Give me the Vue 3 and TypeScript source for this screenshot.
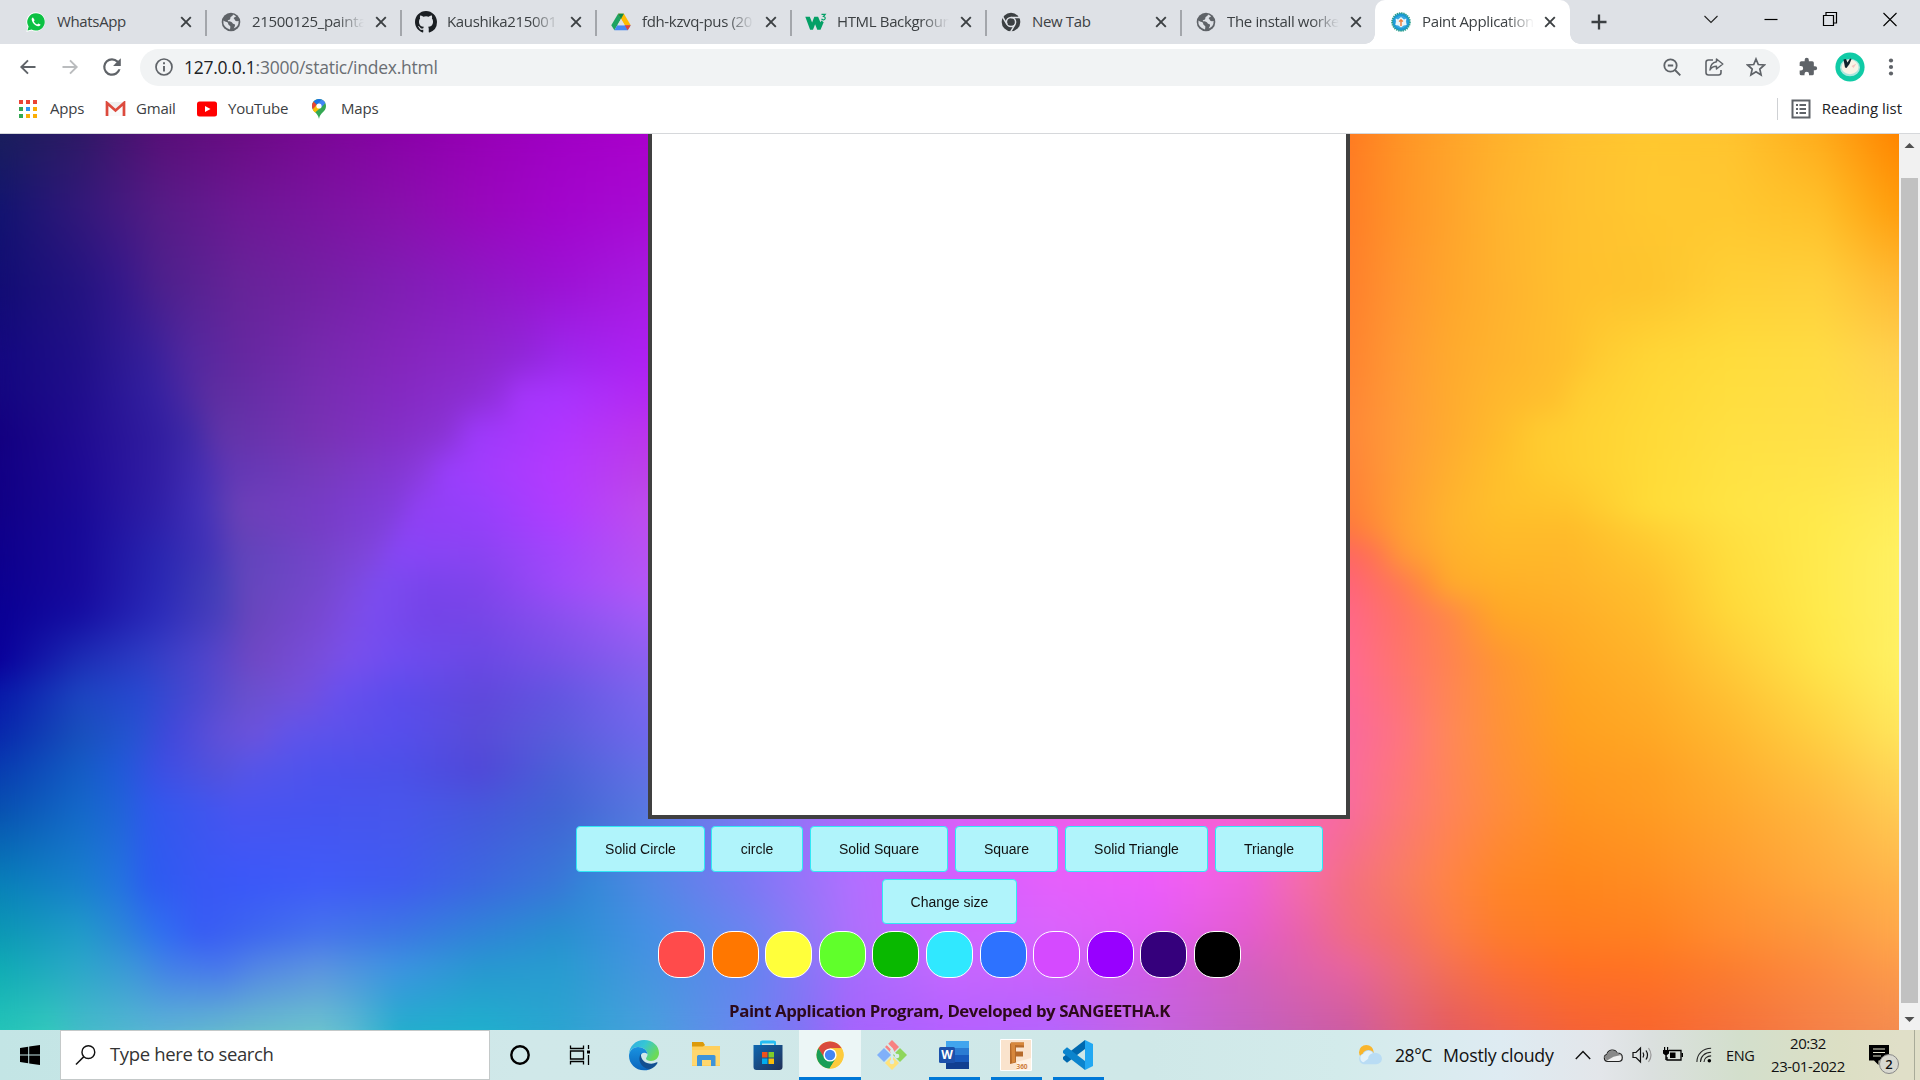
<script setup lang="ts">
interface Tab {
  title: string
  icon: string
  fade: boolean
}

const tabs: Tab[] = [
  { title: 'WhatsApp', icon: 'whatsapp', fade: false },
  { title: '21500125_painta', icon: 'globe', fade: true },
  { title: 'Kaushika215001', icon: 'github', fade: true },
  { title: 'fdh-kzvq-pus (20', icon: 'drive', fade: true },
  { title: 'HTML Backgroun', icon: 'w3', fade: true },
  { title: 'New Tab', icon: 'chrome', fade: false },
  { title: 'The install worke', icon: 'globe', fade: true },
  { title: 'Paint Application', icon: 'paint', fade: true },
]
const activeTab = 7

const shapes: { label: string; width: number }[] = [
  { label: 'Solid Circle', width: 129 },
  { label: 'circle', width: 92 },
  { label: 'Solid Square', width: 138 },
  { label: 'Square', width: 103 },
  { label: 'Solid Triangle', width: 143 },
  { label: 'Triangle', width: 108 },
]

const swatches: string[] = [
  '#ff4b4b', '#ff7700', '#ffff3b', '#60ff2b', '#09b800', '#30e8ff',
  '#2d72ff', '#d54aff', '#9800ff', '#35007c', '#000000',
]

const appsDots: string[] = [
  '#ea4335', '#ea4335', '#ea4335', '#34a853', '#2a94f4', '#fbae05', '#34a853', '#fbae05', '#fbae05',
]

/* Wallpaper colour mesh: a y coordinate, then "x colour" stops along that line. */
const mesh: [number, string][] = [
  [0, '0 1a1f5c,80 2f1a66,160 571078,240 6a0c84,320 7a0896,400 8a02a8,480 9700b6,560 a000c4,648 ab00cc,1350 ff7c22,1400 ff9426,1450 ffa42a,1500 ffb22c,1570 ffc030,1650 ffc830,1730 ffc430,1820 ffac1c,1899 ff8400'],
  [75, '0 121470,80 32187a,160 551c86,240 6c1894,320 7a14a0,400 8810ac,480 9808bc,560 a205cc,648 a80ad4,1350 ff7e26,1400 ff9428,1450 ffa42c,1500 ffb42e,1570 ffc030,1650 ffc830,1730 ffc830,1820 ffc02a,1899 ff9c0c'],
  [150, '0 120d74,80 241480,120 34188a,160 4c208c,240 662498,320 7420a4,400 801eb4,480 8e18c4,560 9c12d4,648 a81ae2,1350 ff802c,1400 ff9630,1450 ffa62c,1500 ffb22e,1570 ffc02e,1650 fec42e,1730 ffd036,1820 ffd03c,1899 ffb834'],
  [225, '0 140880,80 201088,150 36209a,190 52289f,240 6428a0,320 762aae,400 8426bc,480 8c28cc,520 9028d8,560 9c28ec,648 ae20f4,1350 ff8430,1400 ff9a34,1450 ffaa2e,1500 ffb42e,1570 ffc02e,1600 ffcc32,1650 ffd636,1730 ffdc3c,1820 ffdc44,1899 ffd050'],
  [262, '0 140680,80 200e8c,155 3420a0,185 4828a2,210 5c2ea0,320 772eb2,400 842ac2,470 8c2ed2,500 9430e2,520 a436fa,560 a834fe,648 b428f2,1350 ff8634,1400 ff9b36,1450 ffab2f,1500 ffb82d,1555 ffc02e,1580 ffce32,1650 ffd837,1730 ffde3f,1820 ffde46,1899 ffd850'],
  [300, '0 130080,80 200c90,160 321ea0,190 3e2aa6,220 6034a8,320 7832b4,400 8430c8,445 8a34d4,475 9c3afa,560 b036ff,648 bc34ec,1350 ff8838,1400 ff9c38,1450 ffac30,1500 ffbc2c,1540 ffcc30,1650 ffda38,1730 ffe042,1820 ffe048,1899 ffe050'],
  [338, '0 120084,80 1e0a94,160 321ea4,200 442eb2,232 6238b4,320 763abc,400 8438d4,424 8c3ce0,446 983efc,560 b43aff,648 bc40e8,1350 ff8438,1400 ff9d36,1450 ffb02f,1500 ffc02c,1540 ffca2e,1650 ffdb38,1730 ffe243,1820 ffe44a,1899 ffe656'],
  [375, '0 110086,80 1a0a96,160 3020a8,200 4230b8,222 563cb4,240 6c40b8,320 763cc6,395 823edc,418 9040f4,480 9640fc,560 b03cff,648 be4cec,1350 ff8038,1400 ff9e34,1450 ffb42e,1500 ffc02c,1570 ffc42c,1650 ffdc38,1730 ffe444,1820 ffe84c,1899 ffec5c'],
  [395, '0 10008a,80 180a98,160 2e22ac,205 4232b8,240 6642b6,320 763ec6,385 8042dc,406 8c42f4,480 9240f8,560 aa40ff,648 bc4ef0,1350 ff783e,1400 ff9e34,1450 ffb42e,1500 ffbc2a,1570 ffbc2a,1650 ffd034,1730 ffe042,1820 ffea4c,1899 ffee5e'],
  [420, '0 0e008c,80 180a9a,160 2a26b0,210 4234b8,240 6044ba,320 7444ca,370 8046dc,396 8646f6,480 8a44f2,560 a246fc,648 b852f2,1350 ff6860,1375 ff7450,1400 ff9638,1450 ffb02c,1500 ffb82a,1570 ffb82a,1650 ffc830,1730 ffde3e,1820 ffea4e,1899 fff062'],
  [450, '0 0c0090,80 180a9c,160 2a28b4,220 4640b8,245 6446bc,320 7448cc,355 7c4ae0,380 7c4cf0,430 7a44ec,480 8044ec,560 9e4afa,648 b456f6,1350 ff6478,1400 ff7854,1430 ff9236,1450 ffaa2c,1500 ffb028,1570 ffb42a,1650 ffc02e,1730 ffdc3c,1820 ffea4e,1899 fff064'],
  [480, '0 0a0094,80 160ea2,160 2c2cba,220 4a40bc,250 6846bc,320 7848d2,350 7c4ce4,375 7a4cf0,430 7444e8,480 7846e8,560 8c50f0,648 a45cf8,1350 ff6886,1400 ff7264,1450 ff8848,1480 ff9c30,1500 ffa826,1570 ffae28,1650 ffbc2c,1730 ffd83a,1820 ffea4c,1899 fff064'],
  [525, '0 0a009a,80 1c2cb4,140 2c3cc4,200 4c44cc,255 7048c4,320 784edc,350 7850ec,400 6e4cf0,480 6a48e4,560 7852e8,648 8c60f0,1350 ff6a90,1400 ff746c,1450 ff8450,1500 ff9632,1570 ffa824,1650 ffb42a,1730 ffcc38,1820 ffe64a,1899 fff064'],
  [560, '0 0818a8,80 1c44c0,140 2848d0,200 4c48d0,245 6850cc,300 7450dc,340 6850ee,400 5c4cec,480 6048dc,560 6456e2,648 7c66ee,1350 fe6a96,1400 fe7476,1450 ff8654,1500 ff9436,1570 ffa422,1650 ffae28,1730 ffc234,1820 ffdc46,1899 ffec60'],
  [600, '0 0828ac,80 1850bc,130 2454d0,170 4048dc,220 6050d8,255 6c52dc,290 6054ea,400 564eec,480 584cd8,560 5a5cdc,648 7068ec,1350 fa6a9c,1400 fe7480,1450 ff8858,1500 ff9238,1570 ffa020,1650 ffa824,1730 ffb830,1820 ffd042,1899 ffe45c'],
  [635, '0 083cb0,80 145cc4,120 205ad8,160 3c4ee4,220 5452dc,250 5656e8,320 4e52ee,400 4c50e8,480 5048d8,560 4c60d8,648 6470e6,1350 fa6c9c,1400 fe767c,1450 ff8658,1500 ff903a,1570 ff9a20,1650 ffa023,1730 ffb02f,1820 ffc440,1899 ffd858'],
  [675, '0 0850b0,80 1468c8,120 2064d8,150 3058ec,240 4a54f0,320 4654f0,400 4856ec,480 4658dc,560 4264d4,648 5878e0,750 7c7cf4,850 b068fc,950 d860f8,1050 ec5cec,1150 f45ee0,1250 f860d0,1350 f86c9c,1400 fc7878,1450 ff8458,1500 ff8c3c,1570 ff9420,1650 ff9c22,1730 ffa82e,1820 ffb840,1899 ffcc54'],
  [750, '0 0880b8,80 1880cc,120 2474e0,150 2c5cf0,200 3858f4,240 3a58f8,320 405cf8,400 405cf0,480 3c68e0,560 3878d8,590 3488d8,648 5088e4,750 7c78f4,850 b070ff,950 d060ff,1050 e460fc,1150 ec5cfc,1200 f060ec,1250 ee60d8,1300 f46cac,1350 f47080,1400 f87c64,1450 ff8444,1500 ff8628,1570 ff861c,1650 ff8c22,1730 ff9830,1820 ffa83e,1899 ffb44c'],
  [800, '0 0c98b4,80 209cc8,120 2c88d8,160 3070f0,200 385cf4,240 3c64f0,320 4674ec,400 3c78e4,480 3084d8,560 2890d0,648 4490e4,750 6c84f0,850 ac70fc,950 cc64ff,1050 d864fc,1150 e05cf4,1250 e45ccc,1300 e862ac,1350 f06c84,1400 f47068,1450 fc7c48,1500 fe7c2c,1570 ff7c20,1650 ff8020,1730 ff8c30,1820 fc983e,1899 ffa84c'],
  [835, '0 10acb4,80 2ca8c8,130 3c98d8,170 4480e8,220 4878ec,260 5488e4,320 5c94e0,400 3c94e0,480 2898d0,560 289cd0,648 4694e0,750 6484f0,850 a46cfc,950 c468ff,1050 cc60fc,1150 d05ce8,1250 d460c0,1350 e8649c,1400 ec6c78,1450 f47054,1500 fc7038,1570 ff7024,1650 ff7424,1730 fc7e30,1820 fc8c40,1899 fc9c4c'],
  [896, '0 24c4b8,50 34c8bc,80 44bcc8,160 5cb4d4,240 68bccc,320 6cc4cc,350 5cbcd0,400 24aecc,480 20b0cc,560 2ca4d0,648 48a0dc,750 6c84f0,800 8074f4,850 a464fc,950 b460ff,1050 b464fc,1150 c464e0,1250 c460c0,1350 cc5ca0,1400 dc6080,1450 e45c60,1500 ec6050,1570 f46238,1650 f8662e,1730 f4703c,1820 f48048,1899 f48c50'],
]

const rowGradient = (row: string): string =>
  `linear-gradient(90deg, ${row
    .split(',')
    .map((stop) => {
      const [x, colour] = stop.split(' ')
      return `#${colour} ${x}px`
    })
    .join(', ')})`

const bands = mesh.slice(0, -1).map(([y, row], i) => ({
  height: `${mesh[i + 1][0] - y}px`,
  top: rowGradient(row),
  bottom: rowGradient(mesh[i + 1][1]),
}))
</script>

<template>
  <div class="screen">
    <header class="tabstrip">
      <div v-for="(tab, i) in tabs" :key="i" class="tab" :class="{ active: i === activeTab, last: i === activeTab - 1 }">
        <svg v-if="tab.icon === 'whatsapp'" class="fav" viewBox="0 0 20 20">
          <path d="M10 .2a9.600 9.600 0 0 0-8.300 14.500L.3 19.900l5.200-1.400A9.600 9.600 0 1 0 10 .2z" fill="#fff" />
          <path d="M10 1.200a8.700 8.700 0 0 0-7.400 13.300l-1.100 4 4.100-1.100A8.700 8.700 0 1 0 10 1.200z" fill="#0cc143" />
          <path d="M7 5.400c-.9.2-1.500 1.200-1.300 2.400.5 3 3.400 6 6.400 6.500 1.300.2 2.300-.6 2.400-1.700l-2.200-1.200-1.100 1.100c-1.600-.6-2.800-1.800-3.400-3.300l.9-1z" fill="#fff" />
        </svg>
        <svg v-else-if="tab.icon === 'globe'" class="fav" viewBox="0 0 20 20">
          <circle cx="10" cy="10" r="9.300" fill="#5f6368" />
          <path d="M2.400 8.500c1.500 1.400 3.300 1 4.300 2 .8 1 .2 2 1.400 2.700 1.200.5 1.400 1.200 1.200 2.200l-.3 2A7.700 7.700 0 0 1 2.400 8.500zM12 2.600c-.2 1.500-1.400 1.700-2.300 2.400-.8.800 0 1.800-.8 2.500s-2 .2-2.200 1.200c.3 1.100 2.300.5 3.700 1.200 1.200.6 1.100 2 2.500 2.200 1.100.2 1.500 1 .8 2.400l-1 2.100A7.800 7.800 0 0 0 17.600 9c-1-.3-1.600.5-2.700.1-1.300-.5-1-2-2.200-2.500.2-1.200 1.500-1.200 2.300-2.300A7.500 7.500 0 0 0 12 2.600z" fill="#dee1e6" />
        </svg>
        <svg v-else-if="tab.icon === 'github'" class="fav wide" viewBox="0 0 16 16">
          <path fill="#1b1f23" d="M8 0C3.580 0 0 3.580 0 8c0 3.540 2.290 6.530 5.470 7.590.4.070.55-.17.55-.38 0-.19-.01-.82-.01-1.490-2.010.37-2.530-.49-2.690-.94-.09-.23-.48-.94-.82-1.130-.28-.15-.68-.52-.01-.53.63-.01 1.080.58 1.230.82.72 1.210 1.870.87 2.330.66.070-.52.28-.87.51-1.070-1.780-.2-3.640-.89-3.640-3.950 0-.87.31-1.590.82-2.150-.08-.2-.36-1.020.08-2.120 0 0 .67-.21 2.200.82a7.600 7.600 0 0 1 4 0c1.530-1.040 2.200-.82 2.200-.82.44 1.100.16 1.920.08 2.120.51.56.82 1.270.82 2.150 0 3.070-1.870 3.750-3.650 3.950.29.25.54.73.54 1.480 0 1.070-.01 1.930-.01 2.200 0 .21.15.46.55.38A8 8 0 0 0 16 8c0-4.420-3.580-8-8-8z" />
        </svg>
        <svg v-else-if="tab.icon === 'drive'" class="fav" viewBox="0 0 20 20">
          <path d="M7.100 1.800h5.800L6.300 13.300l-2.900 5L.3 13.300z" fill="#1ea362" />
          <path d="M12.900 1.800l6.800 11.500h-5.900L7.100 1.800z" fill="#ffba00" />
          <path d="M10 6.900l-2.900-5.100h5.800z" fill="#11894b" />
          <path d="M6.300 13.300h13.400l-3 5H3.400z" fill="#4688f4" />
          <path d="M13.800 13.300h5.900l-3 5z" fill="#ea4335" />
          <path d="M10 7l3.500 6.300h-7z" fill="#dee1e6" />
        </svg>
        <svg v-else-if="tab.icon === 'w3'" class="fav wide" viewBox="0 0 22 20">
          <path d="M.3 4.800h4.500l2.300 5.700 2.200-5.700h3.800l2.300 5.500 1-1.800 2.300 1.700-3.200 7.600h-3.200l-2.200-5.600-2.100 5.600H5.100z" fill="#04a066" />
          <path d="M16.500 2.300h3.700l-1.800 2.200c2.600.1 2.300 3.500-.2 3.300-.8 0-1.400-.4-1.600-1" fill="none" stroke="#04a066" stroke-width="1.200" />
        </svg>
        <svg v-else-if="tab.icon === 'chrome'" class="fav" viewBox="0 0 20 20">
          <circle cx="10" cy="10" r="9.300" fill="#3c4043" />
          <g stroke="#dee1e6" stroke-width="1.500" fill="none">
            <circle cx="10" cy="10" r="4.600" />
            <path d="M10 5.400h9M6 12.300L1.700 5M14 12.300l-4.400 7.500" />
          </g>
        </svg>
        <svg v-else class="fav" viewBox="0 0 20 20">
          <circle cx="10" cy="10" r="8.900" fill="#1c9ad6" stroke="#2b9d87" stroke-width="1.800" stroke-dasharray="1.300 .9" />
          <circle cx="10" cy="10" r="6.300" fill="#3aa9e0" />
          <path d="M4.600 6.500l2.400 1L10 5l3 2.500 2.400-1-.5 3 .8 3.500-3 .5-2.700 2-2.700-2-3-.5.800-3.500z" fill="#eaf4f8" />
          <path d="M10 7v7M8 9.500l2-1.500 2 1.500" fill="none" stroke="#ef7b35" stroke-width="1.400" />
        </svg>
        <span class="tab-title" :class="{ fade: tab.fade }">{{ tab.title }}</span>
        <svg class="tab-close" viewBox="0 0 12 12"><path d="M1.200 1.200l9.600 9.600M10.800 1.200L1.200 10.800" stroke="#3c4043" stroke-width="1.900" /></svg>
      </div>
      <svg class="new-tab" viewBox="0 0 16 16"><path d="M8 .5v15M.5 8h15" stroke="#3c4043" stroke-width="2.300" /></svg>
      <div class="window-controls">
        <svg viewBox="0 0 20 20"><path d="M3.500 7L10 13.500 16.500 7" fill="none" stroke="#222" stroke-width="1.100" /></svg>
        <svg viewBox="0 0 20 20"><path d="M3.500 10.500h13" stroke="#000" stroke-width="1.200" /></svg>
        <svg viewBox="0 0 20 20"><path d="M3.500 6.500h10v10h-10zM6 6.500v-3h10.500v10.500h-3" fill="none" stroke="#000" stroke-width="1.200" /></svg>
        <svg viewBox="0 0 20 20"><path d="M3.500 4l13 13M16.500 4l-13 13" stroke="#000" stroke-width="1.100" /></svg>
      </div>
    </header>

    <div class="toolbar">
      <svg class="nav" viewBox="0 0 24 24"><path d="M21 12H4M12 4l-8 8 8 8" fill="none" stroke="#5f6368" stroke-width="2.300" /></svg>
      <svg class="nav" viewBox="0 0 24 24"><path d="M3 12h17M12 4l8 8-8 8" fill="none" stroke="#babcbe" stroke-width="2.300" /></svg>
      <svg class="nav" viewBox="0 0 24 24"><path d="M17.650 6.350A7.950 7.950 0 0 0 12 4a8 8 0 1 0 7.730 10h-2.080A6 6 0 1 1 12 6c1.660 0 3.140.69 4.220 1.780L13 11h7V4z" fill="#5f6368" transform="translate(-1.200 -1.200) scale(1.100)" /></svg>
      <div class="omnibox">
        <svg class="info" viewBox="0 0 20 20"><circle cx="10" cy="10" r="8" fill="none" stroke="#5f6368" stroke-width="1.700" /><path d="M10 9v5.500M10 5.300v2" stroke="#5f6368" stroke-width="1.900" /></svg>
        <span class="url"><b>127.0.0.1</b>:3000/static/index.html</span>
        <svg class="act" viewBox="0 0 20 20"><circle cx="8.500" cy="8.500" r="6.200" fill="none" stroke="#5f6368" stroke-width="1.800" /><path d="M13 13l5.300 5.300M5.800 8.500h5.400" stroke="#5f6368" stroke-width="1.900" /></svg>
        <svg class="act" viewBox="0 0 20 20"><path d="M9 3H4.500A2.500 2.500 0 0 0 2 5.500v10A2.500 2.500 0 0 0 4.500 18h10a2.500 2.500 0 0 0 2.500-2.500V13" fill="none" stroke="#5f6368" stroke-width="1.600" /><path d="M12.500 2l6.300 5-6.300 5V9.300C9.300 9.300 7.500 10.400 6 13c.3-4.200 2.500-7.500 6.500-8.200z" fill="none" stroke="#5f6368" stroke-width="1.500" stroke-linejoin="round" /></svg>
        <svg class="act" viewBox="0 0 20 20"><path d="M10 2l2.300 5.500 6 .5-4.500 4 1.300 5.900L10 14.800l-5.100 3.100L6.200 12 1.700 8l6-.5z" fill="none" stroke="#5f6368" stroke-width="1.700" /></svg>
      </div>
      <svg class="ext" viewBox="0 0 24 24"><path d="M20.500 11H19V7a2 2 0 0 0-2-2h-4V3.500a2.500 2.500 0 0 0-5 0V5H4a2 2 0 0 0-2 2v3.800h1.500a2.700 2.700 0 0 1 0 5.400H2V20a2 2 0 0 0 2 2h3.800v-1.500a2.700 2.700 0 0 1 5.400 0V22H17a2 2 0 0 0 2-2v-4h1.500a2.500 2.500 0 0 0 0-5z" fill="#5f6368" /></svg>
      <svg class="avatar" viewBox="0 0 30 30">
        <circle cx="15" cy="15" r="14.600" fill="#10cba6" />
        <ellipse cx="15" cy="15.500" rx="10" ry="8.800" fill="#aee7df" />
        <ellipse cx="15" cy="15" rx="8.500" ry="7.200" fill="#faf4e6" />
        <path d="M8.500 7.500l2.500-.5 1.500 3.500 2.500-4 1.500.5-2 5-3 4-1.500-.5z" fill="#12242d" />
        <path d="M16.500 14l5-2.500-3 4.500z" fill="#f5c6c2" />
      </svg>
      <svg class="kebab" viewBox="0 0 6 20"><g fill="#5f6368"><circle cx="3" cy="3.500" r="2.100" /><circle cx="3" cy="10" r="2.100" /><circle cx="3" cy="16.500" r="2.100" /></g></svg>
    </div>

    <nav class="bookmarks">
      <div class="apps-dots"><i v-for="(c, i) in appsDots" :key="i" :style="{ background: c }"></i></div>
      <span class="bm bm-apps">Apps</span>
      <svg class="gmail" viewBox="0 0 20 16"><path d="M1 1h18v14H1z" fill="#efefef" /><path d="M3 1l7 6.500L17 1v14H3z" fill="#fafafa" /><path d="M1.500 15V2L10 9.500 18.500 2v13" fill="none" stroke="#dc4a3d" stroke-width="2.700" /></svg>
      <span class="bm bm-gmail">Gmail</span>
      <svg class="youtube" viewBox="0 0 20 16"><rect y=".5" width="20" height="15" rx="2.500" fill="#f00" /><path d="M8 5l5.500 3L8 11z" fill="#fff" /></svg>
      <span class="bm bm-youtube">YouTube</span>
      <svg class="maps" viewBox="0 0 16 22">
        <path d="M8 1C4 1 1 4 1 8c0 6 6 6.500 7 13 1-6.500 7-7 7-13 0-4-3-7-7-7z" fill="#34a853" />
        <path d="M2.600 3.600L6 6.500l-3.700 5.300C1.500 10.800 1 9.500 1 8c0-1.700.6-3.200 1.600-4.400z" fill="#ea4335" />
        <path d="M2.600 3.600C4 2 6 1 8 1c1 0 2 .2 2.700.5L6 6.700z" fill="#1a73e8" />
        <path d="M10.700 1.500c1.700.7 3 2 3.700 3.600L9.800 10l-3-4.200z" fill="#4285f4" />
        <path d="M9.900 9.500l-5.800 5C2.500 13 1.800 12 1.800 11.200l4-4.500z" fill="#fbbc04" />
        <circle cx="8" cy="8" r="2.600" fill="#fff" />
      </svg>
      <span class="bm bm-maps">Maps</span>
      <div class="reading">
        <svg viewBox="0 0 20 20"><rect x="1.500" y="1.500" width="17" height="17" fill="none" stroke="#5f6368" stroke-width="2" /><path d="M5 6h2M5 10h2M5 14h2M8.500 6H15M8.500 10H15M8.500 14H15" stroke="#5f6368" stroke-width="1.900" /></svg>
        <span>Reading list</span>
      </div>
    </nav>

    <main class="viewport">
      <div class="page">
        <div class="mesh">
          <div v-for="(b, i) in bands" :key="i" class="band" :style="{ height: b.height, background: b.top }">
            <div class="blend" :style="{ background: b.bottom }"></div>
          </div>
        </div>
        <div class="soften"></div>
        <div class="content">
          <div class="board"></div>
          <div class="row shapes">
            <button v-for="s in shapes" :key="s.label" :style="{ width: s.width + 'px' }">{{ s.label }}</button>
          </div>
          <div class="row"><button class="size">Change size</button></div>
          <div class="row palette"><i v-for="c in swatches" :key="c" :style="{ background: c }"></i></div>
          <p class="credit">Paint Application Program, Developed by SANGEETHA.K</p>
        </div>
      </div>
      <div class="scrollbar">
        <svg viewBox="0 0 21 44" class="sb-up"><path d="M5.500 14l5-5 5 5z" fill="#505050" /></svg>
        <div class="thumb"></div>
        <svg viewBox="0 0 21 27" class="sb-down"><path d="M5.500 14l5 5 5-5z" fill="#505050" /></svg>
      </div>
    </main>

    <footer class="taskbar">
      <div class="start"><svg viewBox="0 0 20 20"><path d="M0 2.900L8.200 1.700V9.500H0zM9.200 1.600L20 0v9.500H9.200zM0 10.500h8.200v7.800L0 17.100zM9.200 10.500H20V20L9.200 18.400z" /></svg></div>
      <div class="search">
        <svg viewBox="0 0 22 22"><circle cx="14" cy="8" r="6.700" fill="none" stroke="#111" stroke-width="1.500" /><path d="M9.300 12.700L1 21" stroke="#111" stroke-width="1.500" /></svg>
        <span>Type here to search</span>
      </div>
      <div class="cell small"><svg width="22" height="22" viewBox="0 0 22 22"><circle cx="11" cy="11" r="8.700" fill="none" stroke="#000" stroke-width="2.400" /></svg></div>
      <div class="cell small"><svg width="22" height="22" viewBox="0 0 22 22"><path d="M1.500 1.500v3h13v-3M1.500 7h13v8h-13zM1.500 20.500v-3h13v3M19.500 1v4M19.500 11v10" fill="none" stroke="#000" stroke-width="1.300" /><path d="M18 6.500h3v3h-3z" /></svg></div>
      <div class="cell edge">
        <svg width="32" height="32" viewBox="0 0 32 32">
          <defs>
            <linearGradient id="edgeTop" x1="0" y1="0" x2="1" y2=".5"><stop offset="0" stop-color="#2fa9e3" /><stop offset=".5" stop-color="#36c6d5" /><stop offset="1" stop-color="#6cda57" /></linearGradient>
            <linearGradient id="edgeLow" x1="0" y1="0" x2="0" y2="1"><stop offset="0" stop-color="#1992e0" /><stop offset="1" stop-color="#0a65bd" /></linearGradient>
          </defs>
          <path d="M1 16C1 7 8 1 16 1c9 0 15 6 15 13 0 5-4 8-8 8-3 0-5-1-5-2.500 0-1 1.500-2 1.500-4C19.500 11 15 8 10 8c-5 0-9 4-9 8z" fill="url(#edgeTop)" />
          <path d="M1 17c0-5 4-9 9-9 5 0 9 3 9.500 7-4-3-7 0-7 3 0 6 4 10 9 12.500C10 34 1 26 1 17z" fill="url(#edgeLow)" />
          <path d="M13 14.500c-4 6-.5 14 8.500 16 4-1.300 6.500-4 8-6.500.3-.7-.2-1-.8-.7C22 27 12 23 13 14.500z" fill="#124f91" />
        </svg>
      </div>
      <div class="cell">
        <svg width="30" height="28" viewBox="0 0 30 28"><path d="M1 2h11l2 3h15v20H1z" fill="#ffcf5c" /><path d="M1 1h11l2 3-2 1.500H1z" fill="#dc9a0b" /><path d="M1 9h28v15H1z" fill="#ffd76e" /><path d="M6 25v-9.500c0-1 1-1.500 2-1.500h14.500c1 0 2 .5 2 1.500V25H20v-6h-9v6z" fill="#3e94da" /></svg>
      </div>
      <div class="cell">
        <svg width="32" height="32" viewBox="0 0 32 32"><defs><linearGradient id="store" x1="0" y1="0" x2="1" y2="1"><stop offset="0" stop-color="#0e67b1" /><stop offset="1" stop-color="#233056" /></linearGradient></defs><path d="M9 8V4c0-1 .5-1.500 1.500-1.500h11c1 0 1.500.5 1.500 1.500v4" fill="none" stroke="#27bdf3" stroke-width="2" /><path d="M1.500 6h29v22a3 3 0 0 1-3 3h-23a3 3 0 0 1-3-3z" fill="url(#store)" /><path d="M9 6V3.500h14V6" fill="none" stroke="#27bdf3" stroke-width="1.800" /><path d="M10 13h5.500v5.500H10z" fill="#f1511b" /><path d="M16.500 13H22v5.500h-5.500z" fill="#80cc28" /><path d="M10 19.500h5.500V25H10z" fill="#00adef" /><path d="M16.500 19.500H22V25h-5.500z" fill="#fbbc09" /></svg>
      </div>
      <div class="cell lit">
        <svg width="28" height="28" viewBox="0 0 28 28"><circle cx="14" cy="14" r="13.500" fill="#fcc934" /><path d="M2.300 7.200A13.500 13.500 0 0 1 25.700 7.200H14l-6 10z" fill="#d94a3d" /><path d="M2.300 7.200A13.500 13.500 0 0 0 13.500 27.500L20 17.500l-11.500-.5z" fill="#189e56" /><path d="M20 17l-6.500 10.500A13.500 13.500 0 0 0 25.700 7.200H14z" fill="#fdcb3d" /><circle cx="14" cy="14" r="6.600" fill="#fff" /><circle cx="14" cy="14" r="5.200" fill="#4385f4" /></svg>
      </div>
      <div class="cell">
        <svg width="32" height="32" viewBox="0 0 32 32"><path d="M16 1l7 7-7 7-7-7z" fill="#f88282" /><path d="M24 9l7 7-7 7-7-7z" fill="#8fd65c" /><path d="M16 17l7 7-7 7-7-7z" fill="#ffe27b" /><path d="M8 9l7 7-7 7-7-7z" fill="#80b0fa" /><path d="M11 5l5 5v14M16 12l5 5" fill="none" stroke="#d9eceb" stroke-width="2" /><circle cx="16" cy="12" r="2" fill="#d9eceb" /><circle cx="21" cy="17" r="2.300" fill="#d9eceb" /><circle cx="16" cy="23" r="2.300" fill="#d9eceb" /></svg>
      </div>
      <div class="cell open">
        <svg width="32" height="32" viewBox="0 0 32 32"><path d="M8 2h23v8H8z" fill="#41a5ee" /><path d="M8 9h23v7H8z" fill="#2b7cd3" /><path d="M8 16h23v7H8z" fill="#185abd" /><path d="M8 23h23v7H8z" fill="#103f91" /><rect x="1" y="8" width="16" height="16" rx="1.500" fill="#1c51ab" /><text x="9" y="20.200" class="word">W</text></svg>
      </div>
      <div class="cell open">
        <svg width="32" height="32" viewBox="0 0 32 32"><path d="M.5.500h31v31H.5z" fill="#fae3cd" stroke="#fff" /><path d="M11 3.500h13v5h-8v4h7v5h-7v6l-6 1.500V5z" fill="#b66a2a" /><path d="M11 3.500h13v3l-9-.5v17l-3 1z" fill="#d7873c" /><path d="M17 23l14-4v12H17z" fill="#fff3e5" /><text x="22" y="30" class="fusion">360</text></svg>
      </div>
      <div class="cell open">
        <svg width="32" height="32" viewBox="0 0 32 32"><path d="M23 1v9L5 23.800l-4-3.500V18z" fill="#0069af" /><path d="M23 31v-9L5 8.200l-4 3.500V14z" fill="#0b84cd" /><path d="M23 1l8 4v22l-8 4z" fill="#23a8f2" /></svg>
      </div>

      <div class="tray">
        <svg class="weather" viewBox="0 0 28 24"><circle cx="10" cy="9" r="8" fill="#f9b52c" /><path d="M7 22a6 6 0 0 1-1-11.500C8 6 15 5 18 9.500c7-.5 9.500 4 9 7.500-.5 3-3 5-6 5z" fill="#b9dcf4" /><path d="M7 20a5 5 0 0 1 0-9.500C9 6.500 15 6 17 10c-4 1-5 4-5 6z" fill="#e3f2fb" /></svg>
        <span class="temp">28°C</span>
        <span class="sky">Mostly cloudy</span>
        <svg class="t-chev" viewBox="0 0 16 16"><path d="M.8 12L8 4.500l7.200 7.500" fill="none" stroke="#111" stroke-width="1.400" /></svg>
        <svg class="t-cloud" viewBox="0 0 20 14"><path d="M4.500 13a3.700 3.700 0 0 1-.5-7.200C5 1 12 0 14 4.500c3.500 0 5.300 2 5.300 4.500S17.500 13 15.500 13z" fill="#efefef" stroke="#222" stroke-width="1.200" /><path d="M1 8.500L4 6C5 1 12 0 14 4.500l5 2.500-2-.3-6.500 1.500L4 12z" fill="#888" /></svg>
        <svg class="t-sound" viewBox="0 0 20 18"><path d="M1 6.500h3L8.500 2v14L4 11.500H1z" fill="none" stroke="#111" stroke-width="1.200" /><path d="M11 6.500q1.500 2.500 0 5M14 4.500q3 4.500 0 9" fill="none" stroke="#111" stroke-width="1.200" /><path d="M16.500 2q5 7 0 14" fill="none" stroke="#999" stroke-width="1.200" /></svg>
        <svg class="t-batt" viewBox="0 0 20 16"><path d="M6 3.500h12v9.500H4v-3" fill="none" stroke="#000" stroke-width="1.300" /><path d="M7 5.500h5.500v5.500H7zM18.500 6H20v4h-1.500zM0 3h6v3.500L4 8H2L0 6.500zM1 0h1.200v3H1zM4 0h1.200v3H4zM2.300 7h1.500v6H2.300z" /></svg>
        <svg class="t-wifi" viewBox="0 0 18 18"><g fill="none" stroke="#222" stroke-width="1.200"><path d="M1 17C1 8 8 1.500 17 1.500M5 17C5 10.500 10 6 17 6M9 17c0-4 3.500-7 8-7" /></g><circle cx="15" cy="15.500" r="2" /></svg>
        <span class="lang">ENG</span>
        <div class="clock"><span class="time">20:32</span><span class="date">23-01-2022</span></div>
        <div class="notes">
          <svg viewBox="0 0 20 20"><path d="M0 0h20v15.500H9.500V20L5 15.500H0z" /><path d="M4 4h12M4 7.500h12M4 11h8" stroke="#e4e4d0" stroke-width="1.200" /></svg>
          <span class="badge">2</span>
        </div>
        <div class="peek"></div>
      </div>
    </footer>
  </div>
</template>

<style>
body {
  margin: 0;
  overflow: hidden;
}
</style>

<style scoped>
.screen {
  width: 1920px;
  height: 1080px;
  overflow: hidden;
  display: flex;
  flex-direction: column;
  font-family: 'Open Sans', 'Noto Sans', sans-serif;
  color: #3c4043;
  background: #fff;
}
svg {
  display: block;
  flex: none;
}
.screen span {
  white-space: nowrap;
}

/* Tab strip */
.tabstrip {
  height: 44px;
  display: flex;
  align-items: center;
  padding-left: 10px;
  background: #dee1e6;
  flex: none;
}
.tab {
  width: 195px;
  height: 44px;
  box-sizing: border-box;
  padding-left: 16px;
  display: flex;
  align-items: center;
  flex: none;
  position: relative;
}
.tab:not(.active):not(.last)::after {
  content: '';
  position: absolute;
  right: -1.500px;
  top: 10px;
  width: 2px;
  height: 26px;
  background: #a3a6ab;
}
.tab.active {
  background: #fff;
  border-radius: 10px 10px 0 0;
}
.tab.active::before,
.tab.active::after {
  content: '';
  position: absolute;
  bottom: 0;
  width: 10px;
  height: 10px;
}
.tab.active::before {
  left: -10px;
  background: radial-gradient(circle at 0 0, transparent 9.500px, #fff 10px);
}
.tab.active::after {
  right: -10px;
  background: radial-gradient(circle at 100% 0, transparent 9.500px, #fff 10px);
}
.fav {
  width: 20px;
  height: 20px;
  margin-right: 11px;
}
.fav.wide {
  width: 22px;
  height: 22px;
  margin: 0 10px 0 -1px;
}
.tab-title {
  width: 113px;
  overflow: hidden;
  font-size: 15px;
  letter-spacing: -0.35px;
  line-height: 24px;
  margin-top: -2px;
}
.tab-title.fade {
  -webkit-mask-image: linear-gradient(90deg, #000 84px, transparent 112px);
  mask-image: linear-gradient(90deg, #000 84px, transparent 112px);
}
.tab-close {
  width: 12px;
  height: 12px;
  margin-left: 10px;
}
.tab.active .tab-close {
  margin-left: 9px;
}
.new-tab {
  width: 16px;
  height: 16px;
  margin-left: 21px;
}
.window-controls {
  margin: -7px 20.500px 0 auto;
  display: flex;
  gap: 39.500px;
}
.window-controls svg {
  width: 20px;
  height: 20px;
}

/* Toolbar */
.toolbar {
  height: 47px;
  display: flex;
  align-items: center;
  padding-left: 18px;
  padding-bottom: 1px;
  box-sizing: border-box;
  flex: none;
}
.nav {
  width: 20px;
  height: 20px;
  margin-right: 22px;
}
.nav:nth-child(3) {
  margin-right: 16px;
  width: 24px;
  height: 24px;
  margin-left: -2px;
}
.omnibox {
  width: 1640px;
  height: 37px;
  border-radius: 19px;
  background: #f1f3f4;
  display: flex;
  align-items: center;
  box-sizing: border-box;
  padding: 0 14px;
}
.info {
  width: 20px;
  height: 20px;
  margin-right: 10px;
}
.url {
  flex: 1;
  font-size: 17.500px;
  letter-spacing: -0.25px;
  line-height: 24px;
  margin-top: -1px;
  color: #6a6e73;
}
.url b {
  font-weight: 400;
  color: #202124;
}
.act {
  width: 20px;
  height: 20px;
  margin-left: 22px;
}
.ext {
  width: 20px;
  height: 22px;
  margin-left: 18px;
}
.avatar {
  width: 30px;
  height: 30px;
  margin-left: 17px;
}
.kebab {
  width: 6px;
  height: 20px;
  margin-left: 23px;
}

/* Bookmarks */
.bookmarks {
  height: 43px;
  box-sizing: border-box;
  border-bottom: 1px solid #d6d8db;
  padding: 0 18px 7px 19px;
  display: flex;
  align-items: center;
  font-size: 15px;
  letter-spacing: -0.2px;
  flex: none;
}
.apps-dots {
  display: grid;
  grid-template-columns: repeat(3, 4px);
  grid-auto-rows: 4px;
  gap: 3px;
  margin-right: 13px;
}
.bm {
  line-height: 22px;
  margin-top: -2px;
}
.bm-apps {
  width: 55px;
}
.gmail {
  width: 21px;
  height: 16px;
  margin-right: 10px;
}
.bm-gmail {
  width: 61px;
}
.youtube {
  width: 20px;
  height: 16px;
  margin-right: 11px;
}
.bm-youtube {
  width: 83px;
}
.maps {
  width: 16px;
  height: 22px;
  margin-right: 14px;
}
.reading {
  margin-left: auto;
  height: 22px;
  border-left: 1px solid #cfd1d4;
  padding-left: 13px;
  display: flex;
  align-items: center;
  gap: 11px;
}
.reading svg {
  width: 20px;
  height: 20px;
}
.reading span {
  color: #202124;
  letter-spacing: 0;
  line-height: 22px;
  margin-top: -2px;
}

/* Web page */
.viewport {
  height: 896px;
  display: flex;
  flex: none;
}
.page {
  width: 1899px;
  height: 896px;
  display: grid;
  overflow: hidden;
}
.mesh,
.soften,
.content {
  grid-area: 1 / 1;
}
.blend {
  height: 100%;
  -webkit-mask-image: linear-gradient(transparent, #000);
  mask-image: linear-gradient(transparent, #000);
}
.soften {
  backdrop-filter: blur(9px);
}
.content {
  z-index: 1;
  display: flex;
  flex-direction: column;
  align-items: center;
}
.board {
  width: 702px;
  height: 685px;
  box-sizing: border-box;
  border: 4px solid #404040;
  border-top: 0;
  background: #fff;
  align-self: flex-start;
  margin-left: 648px;
}
.row {
  display: flex;
  gap: 7px;
  margin-top: 7px;
}
.shapes button:nth-child(2) {
  margin-left: -1px;
}
button {
  height: 46px;
  padding: 0;
  border: 1px solid #30e8f5;
  border-radius: 4px;
  background: #b0f4fb;
  font: 14px 'Liberation Sans', Arial, sans-serif;
  color: #111;
  white-space: nowrap;
}
button.size {
  width: 135px;
  height: 45px;
}
.palette {
  gap: 6.600px;
}
.palette i {
  width: 47px;
  height: 47px;
  box-sizing: border-box;
  border: 1px solid #fff;
  border-radius: 20px;
}
.credit {
  margin: 20px 0 0;
  font-size: 16.800px;
  font-weight: 700;
  line-height: 26px;
  letter-spacing: -0.43px;
  color: #2d0a1c;
  white-space: nowrap;
}
.scrollbar {
  width: 21px;
  background: #f1f1f1;
  display: flex;
  flex-direction: column;
  align-items: center;
}
.sb-up {
  width: 21px;
  height: 44px;
}
.thumb {
  width: 17px;
  flex: 1;
  background: #c1c1c1;
}
.sb-down {
  width: 21px;
  height: 27px;
}

/* Taskbar */
.taskbar {
  height: 50px;
  display: flex;
  background: linear-gradient(90deg, #c3e5e5, #d0e8e9 520px, #cfe8e8 1150px, #d3ebeb 1340px, #deebf2 1500px, #e3e6ea 1600px, #dbe0df 1650px, #d3dfcc 1740px, #dcdfc4 1840px, #e0dfc8 1900px);
  flex: none;
  color: #111;
}
.start {
  width: 60px;
  display: flex;
  align-items: center;
  justify-content: center;
}
.start svg {
  width: 20px;
  height: 20px;
}
.search {
  width: 430px;
  box-sizing: border-box;
  background: #fff;
  border: 1px solid #c4c9c9;
  display: flex;
  align-items: center;
  padding-left: 14px;
  font-size: 18.500px;
  letter-spacing: -0.35px;
  color: #333;
}
.search span {
  line-height: 26px;
  margin-top: -2px;
}
.search svg {
  width: 21px;
  height: 22px;
  margin-right: 14px;
}
.cell {
  width: 62px;
  display: flex;
  align-items: center;
  justify-content: center;
  position: relative;
  flex: none;
}
.cell.small {
  width: 60px;
}
.cell.edge {
  margin-left: 3px;
}
.cell.lit {
  background: #ecf6f6;
  box-shadow: inset 0 -3px #0078d7;
}
.cell.open::after {
  content: '';
  position: absolute;
  bottom: 0;
  left: 6px;
  width: 51px;
  height: 3px;
  background: #0078d7;
}
.word {
  font: 700 12px 'Open Sans', sans-serif;
  fill: #fff;
  text-anchor: middle;
}
.fusion {
  font: 700 6.500px 'Open Sans', sans-serif;
  fill: #cf8040;
  text-anchor: middle;
}
.tray {
  margin-left: auto;
  display: flex;
  align-items: center;
}
.weather {
  width: 26px;
  height: 22px;
  margin-right: 12px;
}
.temp,
.sky {
  font-size: 17.500px;
  letter-spacing: -0.4px;
}
.temp {
  width: 48px;
}
.sky {
  width: 132px;
  font-size: 17.800px;
  letter-spacing: -0.25px;
}
.t-chev {
  width: 16px;
  height: 16px;
  margin-right: 12px;
}
.t-cloud {
  width: 20px;
  height: 15px;
  margin-right: 9px;
}
.t-sound {
  width: 20px;
  height: 18px;
  margin-right: 11px;
}
.t-batt {
  width: 20px;
  height: 16px;
  margin-right: 13px;
}
.t-wifi {
  width: 16px;
  height: 18px;
  margin-right: 14px;
}
.lang {
  width: 44px;
  font-size: 14.500px;
  letter-spacing: -0.3px;
}
.clock {
  width: 76px;
  display: flex;
  flex-direction: column;
  align-items: center;
  font-size: 15px;
  letter-spacing: -0.45px;
  line-height: 23px;
}
.notes {
  width: 20px;
  height: 20px;
  margin: 0 25px 0 23px;
  position: relative;
}
.notes svg {
  width: 20px;
  height: 20px;
}
.badge {
  position: absolute;
  left: 10px;
  top: 9px;
  width: 20px;
  height: 20px;
  box-sizing: border-box;
  border: 1px solid #888;
  border-radius: 50%;
  background: #d8d8d0;
  text-align: center;
  font-size: 13px;
  font-weight: 600;
  line-height: 18px;
}
.peek {
  width: 5px;
  height: 50px;
  border-left: 1px solid #a9ab99;
}
</style>
